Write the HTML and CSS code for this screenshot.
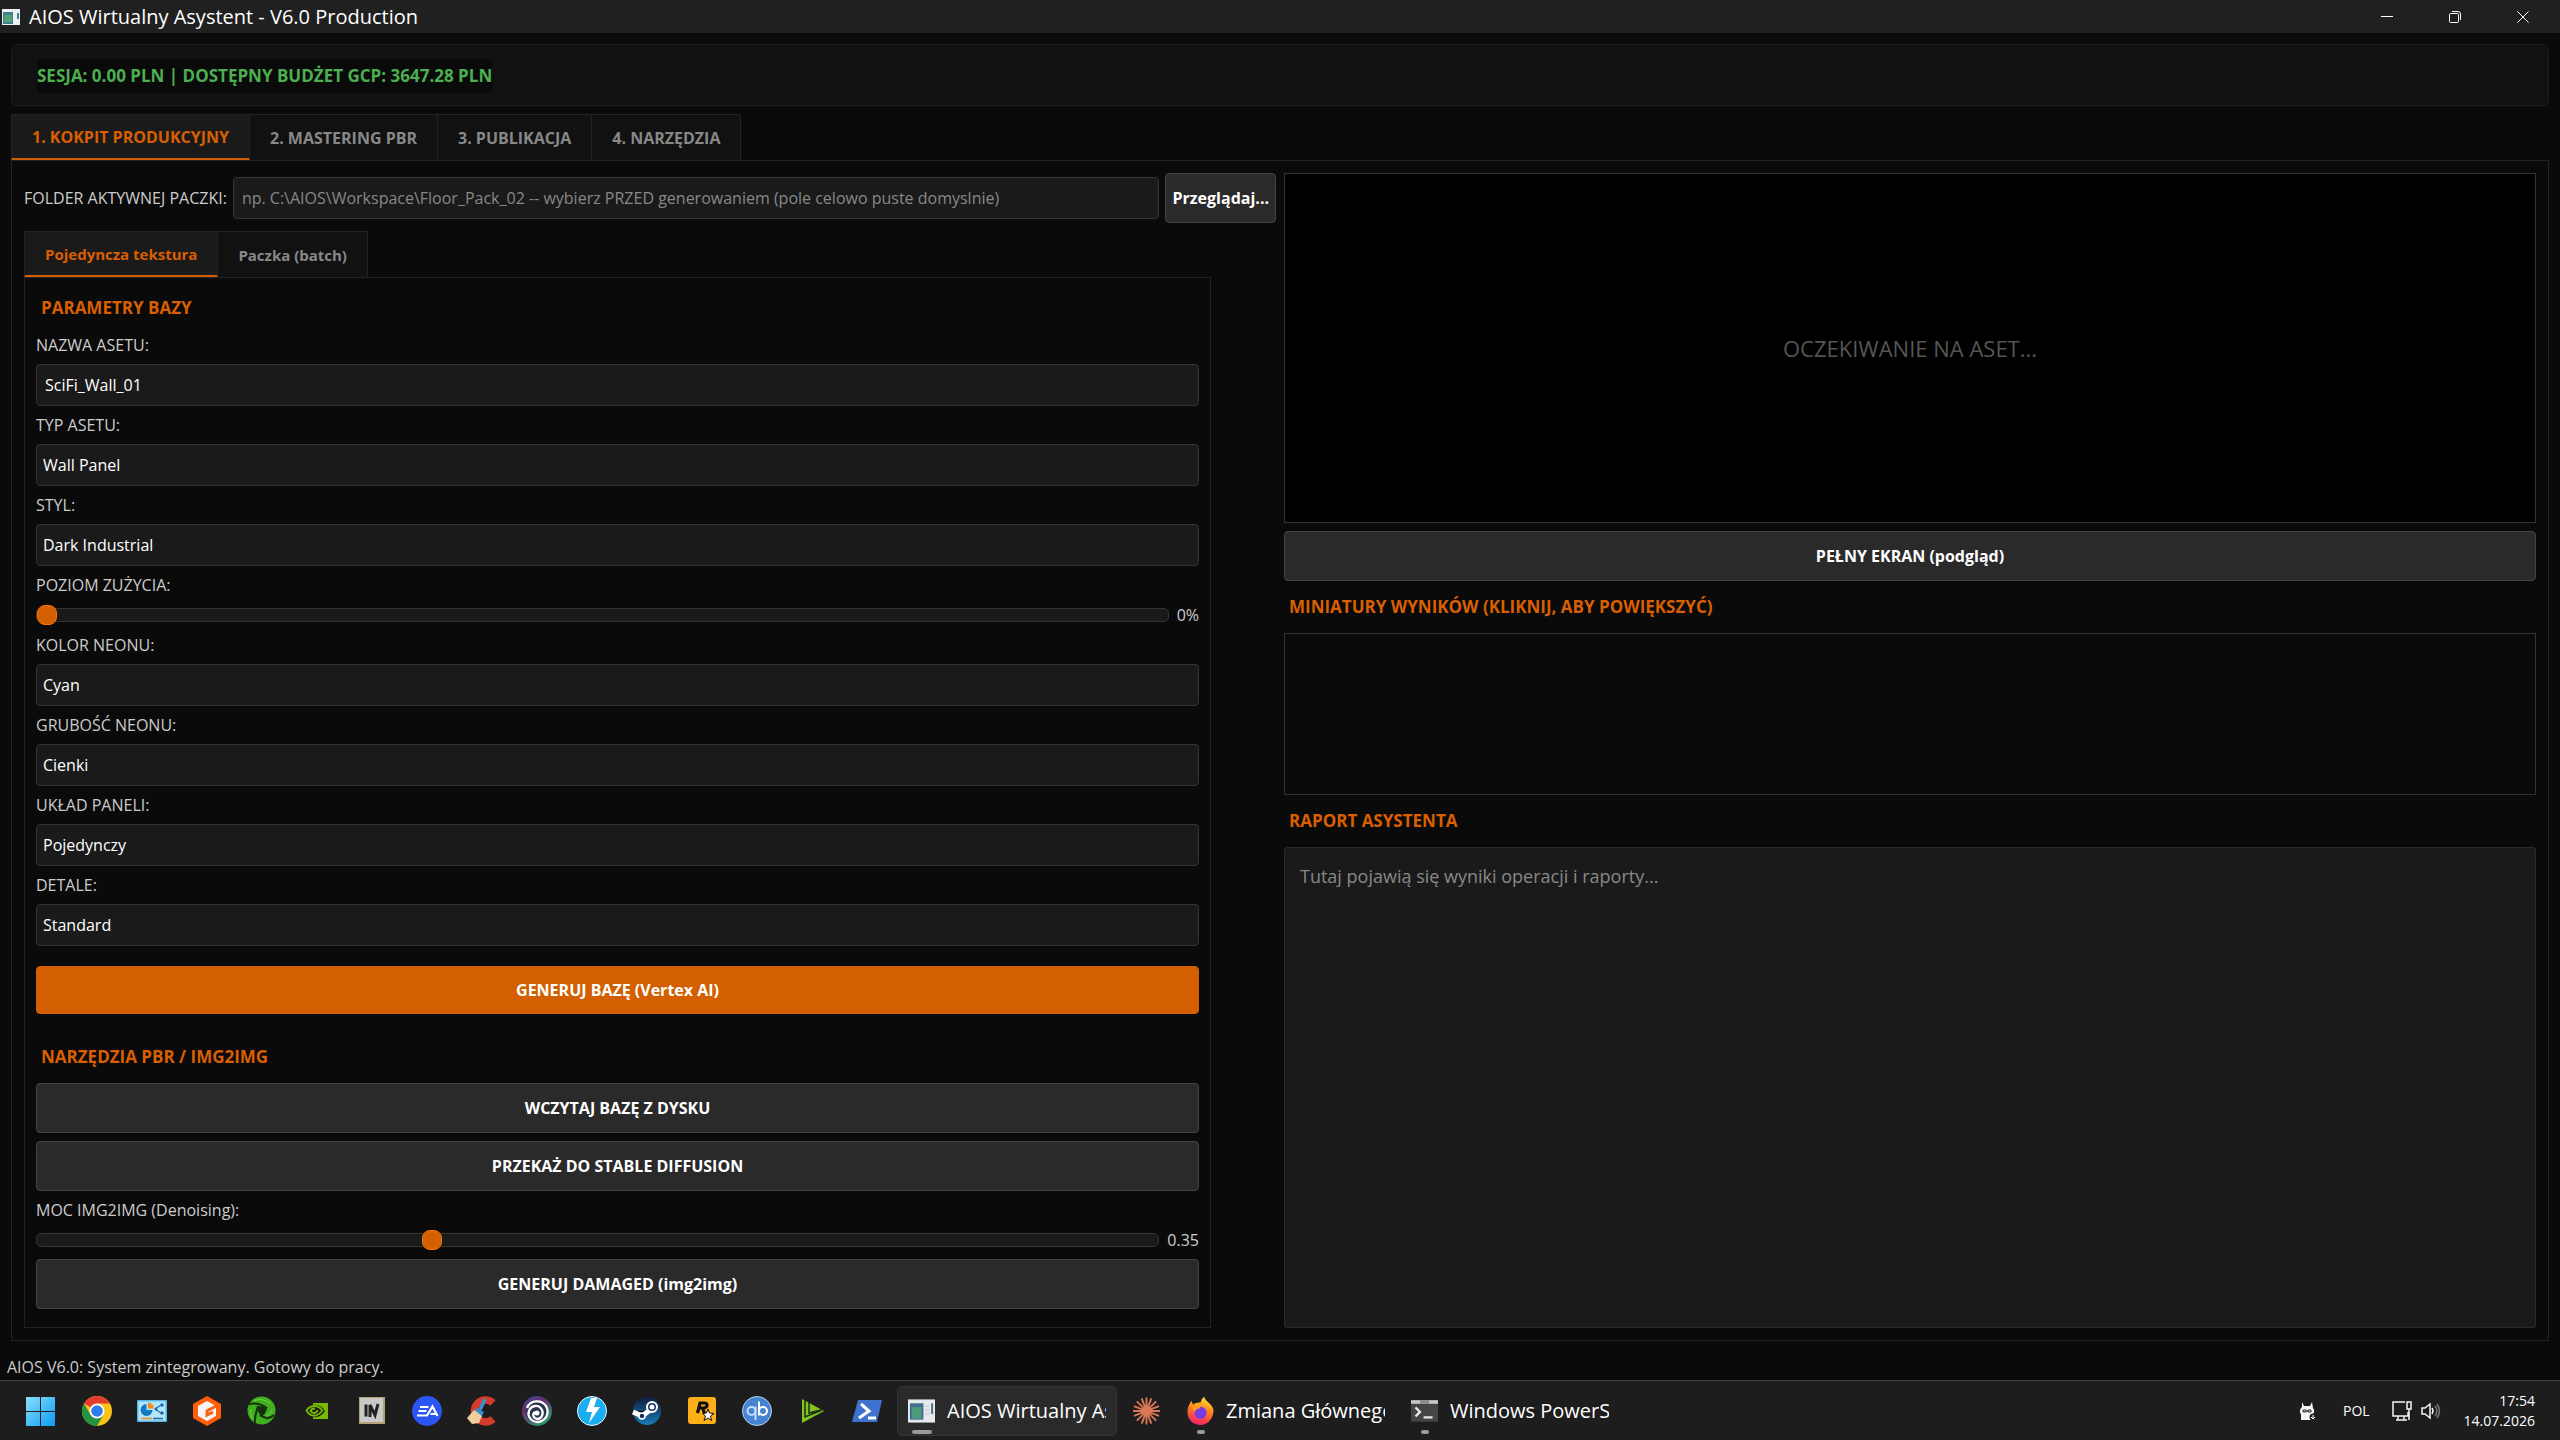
FILE: index.html
```html
<!DOCTYPE html>
<html lang="pl">
<head>
<meta charset="utf-8">
<title>AIOS Wirtualny Asystent - V6.0 Production</title>
<link rel="stylesheet" href="styles.css">
</head>
<body>
<div class="window">
  <header class="titlebar">
    <svg class="app-icon" viewBox="0 0 18 16"><rect width="18" height="16" fill="#eef1f3"/><rect x="1" y="3" width="10" height="12" fill="#3f7f8c"/><rect x="2" y="6" width="8" height="7" fill="#56a07c"/><rect x="15" y="4" width="2" height="6" fill="#3f7f8c"/></svg>
    <h1 class="window-title">AIOS Wirtualny Asystent - V6.0 Production</h1>
    <div class="window-controls">
      <button class="wc" aria-label="Minimalizuj"><svg viewBox="0 0 14 14"><path d="M1 6.500h12"/></svg></button>
      <button class="wc" aria-label="Przywróć"><svg viewBox="0 0 14 14"><rect x="1.500" y="3.500" width="9" height="9" rx="1"/><path d="M4 1.500h6a2.500 2.500 0 0 1 2.500 2.500v6"/></svg></button>
      <button class="wc" aria-label="Zamknij"><svg viewBox="0 0 14 14"><path d="M1.500 1.500l11 11M12.500 1.500l-11 11"/></svg></button>
    </div>
  </header>

  <main class="app">
    <section class="budget"><span class="budget-text">SESJA: 0.00 PLN | DOSTĘPNY BUDŻET GCP: 3647.28 PLN</span></section>

    <nav class="tabs">
      <button class="tab active">1. KOKPIT PRODUKCYJNY</button>
      <button class="tab">2. MASTERING PBR</button>
      <button class="tab">3. PUBLIKACJA</button>
      <button class="tab">4. NARZĘDZIA</button>
    </nav>

    <div class="pane">
      <div class="left">
        <div class="folder-row">
          <label for="folder">FOLDER AKTYWNEJ PACZKI:</label>
          <input class="field" id="folder" type="text" placeholder="np. C:\AIOS\Workspace\Floor_Pack_02 -- wybierz PRZED generowaniem (pole celowo puste domyslnie)">
          <button class="btn browse">Przeglądaj...</button>
        </div>
        <nav class="tabs subtabs">
          <button class="tab active">Pojedyncza tekstura</button>
          <button class="tab">Paczka (batch)</button>
        </nav>
        <form class="form">
          <h2 class="heading">PARAMETRY BAZY</h2>
          <label for="name">NAZWA ASETU:</label>
          <input class="field" id="name" type="text" value="SciFi_Wall_01">
          <label for="type">TYP ASETU:</label>
          <select class="field" id="type"><option>Wall Panel</option></select>
          <label for="style">STYL:</label>
          <select class="field" id="style"><option>Dark Industrial</option></select>
          <label for="wear">POZIOM ZUŻYCIA:</label>
          <div class="slider-row"><input class="slider" id="wear" type="range" min="0" max="100" value="0"><output for="wear">0%</output></div>
          <label for="color">KOLOR NEONU:</label>
          <select class="field" id="color"><option>Cyan</option></select>
          <label for="thick">GRUBOŚĆ NEONU:</label>
          <select class="field" id="thick"><option>Cienki</option></select>
          <label for="layout">UKŁAD PANELI:</label>
          <select class="field" id="layout"><option>Pojedynczy</option></select>
          <label for="details">DETALE:</label>
          <select class="field" id="details"><option>Standard</option></select>
          <button type="button" class="btn primary">GENERUJ BAZĘ (Vertex AI)</button>
          <h2 class="heading">NARZĘDZIA PBR / IMG2IMG</h2>
          <button type="button" class="btn">WCZYTAJ BAZĘ Z DYSKU</button>
          <button type="button" class="btn">PRZEKAŻ DO STABLE DIFFUSION</button>
          <label for="denoise">MOC IMG2IMG (Denoising):</label>
          <div class="slider-row"><input class="slider" id="denoise" type="range" min="0" max="1" step="0.01" value="0.35"><output for="denoise">0.35</output></div>
          <button type="button" class="btn">GENERUJ DAMAGED (img2img)</button>
        </form>
      </div>

      <div class="right">
        <div class="preview">OCZEKIWANIE NA ASET...</div>
        <button class="btn">PEŁNY EKRAN (podgląd)</button>
        <h2 class="heading">MINIATURY WYNIKÓW (KLIKNIJ, ABY POWIĘKSZYĆ)</h2>
        <div class="thumbs"></div>
        <h2 class="heading">RAPORT ASYSTENTA</h2>
        <textarea class="report" aria-label="Raport asystenta" placeholder="Tutaj pojawią się wyniki operacji i raporty..."></textarea>
      </div>
    </div>
  </main>

  <footer class="status">AIOS V6.0: System zintegrowany. Gotowy do pracy.</footer>
</div>

<div class="taskbar">
  <div class="launchers">
    <button class="launch" aria-label="Start"><svg viewBox="2 0 32 32"><defs><linearGradient id="win" x1="0" y1="0" x2="1" y2="1"><stop offset="0" stop-color="#8be0fb"/><stop offset="1" stop-color="#0a9af5"/></linearGradient></defs><path fill="url(#win)" d="M2 2h14v14H2zM17 2h14v14H17zM2 17h14v14H2zM17 17h14v14H17z"/></svg></button>
    <button class="launch" aria-label="Chrome"><svg viewBox="0 0 32 32"><circle cx="16" cy="16" r="15" fill="#fbc116"/><path fill="#e33b2e" d="M16 16L3 8.500A15 15 0 0 1 29 8.500H16z"/><path fill="#229342" d="M3 8.500A15 15 0 0 0 16 31L22.500 19.700 16 16 9.500 19.700z"/><circle cx="16" cy="16" r="7.500" fill="#fff"/><circle cx="16" cy="16" r="5.800" fill="#2f7de9"/></svg></button>
    <button class="launch" aria-label="Panel sterowania"><svg viewBox="0 0 32 32"><rect x="1" y="5" width="30" height="22" rx="1" fill="#59b7e8"/><rect x="2.500" y="6.500" width="27" height="19" fill="#b3e6fb"/><path fill="#1479c4" d="M10.500 9v6h6a6 6 0 1 1-6-6z"/><path fill="#f28a1c" d="M12 7.500a6 6 0 0 1 6 6h-6z"/><path stroke="#1f6cab" stroke-width="1.200" fill="none" d="M19 14l6-4M19 14l6 4"/><circle cx="20" cy="14" r="1.500" fill="#1f6cab"/><circle cx="26" cy="10" r="1.800" fill="#1f6cab"/><circle cx="26" cy="18" r="1.800" fill="#1f6cab"/><path stroke="#f28a1c" stroke-width="1.500" d="M5 23.500h11"/><path stroke="#1f6cab" stroke-width="1.500" d="M17 23.500h10"/></svg></button>
    <button class="launch" aria-label="G"><svg viewBox="0 0 32 32"><path fill="#ff5f0a" d="M16 1l14 8v14l-14 8-14-8V9z"/><path fill="#f4f6f8" d="M16 6l9 5v10l-9 5-9-5V11z"/><path fill="none" stroke="#ff5f0a" stroke-width="3" d="M28 9.500l-12 6.500v4l6-3"/></svg></button>
    <button class="launch" aria-label="Wir"><svg viewBox="0 0 32 32"><circle cx="15.500" cy="15.500" r="14" fill="#3fae1f"/><path fill="#17300f" d="M11 12c3-1 6-1 9 0l1 1c-1 3-2 6-5 8h-1c-2-3-4-5-4-9z"/><path fill="none" stroke="#17300f" stroke-width="2" d="M3 9c5-1 12 0 18 4M12 11c-1 5-4 10-3 18M28 20c-4 4-9 4-14 0M20 13c-1 5-3 7-6 8"/><path fill="none" stroke="#6fd247" d="M8 6c6-3 12-1 17 3M5 14c-1 4 0 8 2 10M26 14c0 4-3 6-6 7"/></svg></button>
    <button class="launch" aria-label="NVIDIA"><svg viewBox="0 0 32 32"><path fill="#76b900" d="M12 8h15v16H12z"/><path fill="#1d1d1d" d="M12 10c6-1 10 3 12 6-3 4-7 7-12 6z"/><path fill="none" stroke="#76b900" stroke-width="1.800" d="M14 11C9 11 7 13 5.500 15.500 8 20 12 21 15 20.500c3-1 5-3 6.500-5C19 12.500 17 11 14 11zM14 13.500c-2 0-4 .800-4.500 2.300 1 1.800 3 2.700 5 1.800 1-.400 2-1.600 2-2.600"/></svg></button>
    <button class="launch" aria-label="IV"><svg viewBox="0 0 32 32"><rect x="3" y="2" width="26" height="27" fill="#b3a278"/><rect x="4" y="3" width="23" height="24" fill="#c9c9c8"/><path fill="none" stroke="#222" stroke-width="3" d="M10 9.500v12M14 22V10l5 10 3-11"/></svg></button>
    <button class="launch" aria-label="EA"><svg viewBox="0 0 32 32"><circle cx="16" cy="16" r="15" fill="#2b55f3"/><path fill="none" stroke="#fff" stroke-width="2.200" d="M9 12h8.500M7.500 16h8M6 20.500h10l5.500-9 5 9.500M19.500 19h6"/></svg></button>
    <button class="launch" aria-label="CCleaner"><svg viewBox="0 0 32 32"><path fill="none" stroke="#d63a2b" stroke-width="7.500" d="M27 8a11 11 0 1 0 0 16"/><path stroke="#3792cf" stroke-width="3.500" d="M19 4l-5 11"/><path fill="#3792cf" d="M10 13l8 4-3 5-7-5z"/><path fill="#efcf9e" d="M8 15l8 6-3 7-7 1-5-6z"/></svg></button>
    <button class="launch" aria-label="Ubisoft"><svg viewBox="0 0 32 32"><defs><linearGradient id="ubi" x1="0" y1="0" x2="0.600" y2="1"><stop offset="0" stop-color="#29549b"/><stop offset=".4" stop-color="#6a2b72"/><stop offset="1" stop-color="#2c9a68"/></linearGradient></defs><circle cx="16" cy="16" r="15" fill="url(#ubi)"/><circle cx="16" cy="17" r="11" fill="#29344b"/><path fill="none" stroke="#fff" stroke-width="2.300" d="M6 13C9 5 20 4 25 11c4 7 0 15-8 16-7 0-11-6-9-11 2-6 10-7 13-1 2 5-1 9-5 9-4-1-5-5-2-7"/><circle cx="16" cy="18" r="2.500" fill="#fff"/></svg></button>
    <button class="launch" aria-label="DAEMON Tools"><svg viewBox="0 0 32 32"><circle cx="16" cy="16" r="14.500" fill="#19aef0" stroke="#e9f8ff"/><path fill="#fff" d="M15 3h6l-3 9h6L13 28l3-11h-6z"/></svg></button>
    <button class="launch" aria-label="Steam"><svg viewBox="0 0 32 32"><defs><linearGradient id="steam" x1="0" y1="0" x2="0" y2="1"><stop offset="0" stop-color="#101b3f"/><stop offset="1" stop-color="#187bb8"/></linearGradient></defs><circle cx="16" cy="16" r="14" fill="url(#steam)"/><path stroke="#fff" stroke-width="5" d="M2 17l9 4 8-6"/><circle cx="21" cy="12" r="5" fill="#16315d" stroke="#fff" stroke-width="2"/><circle cx="21" cy="12" r="2.500" fill="#fff"/><circle cx="11" cy="21" r="3" fill="#16315d" stroke="#fff" stroke-width="1.500"/></svg></button>
    <button class="launch" aria-label="Rockstar"><svg viewBox="0 0 32 32"><rect x="2" y="2" width="28" height="27" rx="3" fill="#fcaf17"/><path fill="none" stroke="#111" stroke-width="3.200" d="M11.500 18l2.500-10h4.500c4 0 3 5 -1 5h-4M16.500 13L18.500 18"/><path fill="#fff" stroke="#111" d="M22 14l1.500 4 4.500.500-3.500 2.500 1 4.500-3.500-2.500-4 2.500 1.500-4.500-3-2.500 4-.500z"/></svg></button>
    <button class="launch" aria-label="qBittorrent"><svg viewBox="0 0 32 32"><circle cx="16" cy="16" r="14.500" fill="#4583d3" stroke="#b9d3f2"/><circle cx="10.500" cy="16" r="4" fill="none" stroke="#c6ddfa" stroke-width="2"/><path stroke="#c6ddfa" stroke-width="2" d="M14.500 11.500V25"/><path stroke="#fff" stroke-width="2" d="M18 6.500V20.500"/><circle cx="22" cy="16" r="4" fill="none" stroke="#fff" stroke-width="2"/></svg></button>
    <button class="launch" aria-label="Odtwarzacz"><svg viewBox="0 0 32 32"><path fill="#83c41d" d="M6 4l22 12L6 28z"/><path fill="none" stroke="#1d2c14" stroke-width="1.500" d="M9 5v17l17-7M13 7v11l12-3"/></svg></button>
    <button class="launch" aria-label="PowerShell"><svg viewBox="0 0 32 32"><path fill="#3f72cf" d="M7 5h24l-5 22H1z"/><path fill="none" stroke="#fff" stroke-width="3" d="M10 9l8 7L8 23M17 23h8"/></svg></button>
  </div>

  <button class="task current"><svg viewBox="0 0 28 24"><rect width="28" height="24" fill="#e6e9eb"/><rect x="2" y="4" width="14" height="17" fill="#426f90"/><rect x="4" y="8" width="10" height="12" fill="#4c9b7b"/><path stroke="#bcc3c8" d="M18 7h4M18 11h4M18 15h4"/><rect x="24" y="4" width="2" height="11" fill="#426f90"/></svg><span>AIOS Wirtualny Asystent</span></button>
  <button class="task solo" aria-label="Claude"><svg viewBox="0 0 28 28"><path stroke="#d97757" stroke-width="2" d="M14 0v28M0 14h28M4 4l20 20M24 4L4 24M9 1l10 26M19 1L9 27M1 9l26 10M1 19L27 9"/></svg></button>
  <button class="task open"><svg viewBox="0 0 28 30"><defs><linearGradient id="fox" x1="0.700" y1="0" x2="0.400" y2="1"><stop offset="0" stop-color="#ffe12f"/><stop offset=".5" stop-color="#ff7a1f"/><stop offset="1" stop-color="#f01d6a"/></linearGradient></defs><path fill="url(#fox)" d="M18 0c1 5 8 6 10 14 0 9-6 16-14 16S0 24 0 16C0 11 2 8 4 4l2 4c3-2 6-2 8-2 1-3 2-5 4-6z"/><circle cx="14" cy="17" r="6.500" fill="#7a3be0"/><path fill="#ff9a22" d="M5 10c4-2 8-1 9 2-3 0-5 1-6 4-1-2-3-3-3-6z"/></svg><span>Zmiana Głównego okna</span></button>
  <button class="task open"><svg viewBox="0 0 30 24"><rect width="30" height="24" rx="1" fill="#454545"/><path fill="#c9c9c9" d="M0 0h30v4H0z"/><path fill="#8b8b8b" d="M10 0h10v4H10z"/><path fill="none" stroke="#e8e8e8" stroke-width="2.500" d="M5 8l5 5-5 5M14 19h10"/></svg><span>Windows PowerShell</span></button>

  <div class="tray">
    <svg class="llama" viewBox="0 0 18 20"><path fill="#f5f5f5" d="M3 1l2 4h6l2-4 1 6c2 3 1 5 0 6v6H2v-6C0 11 1 8 3 6z"/><path fill="none" stroke="#222" d="M4 9h3v2H4zM9 9h3v2H9zM7 10h2"/><circle cx="14" cy="16" r="3.500" fill="#222"/><path stroke="#fff" fill="none" d="M14 14v4M12 16l2 2 2-2"/></svg>
    <button class="lang">POL</button>
    <button class="net" aria-label="Sieć i dźwięk">
      <svg viewBox="0 0 20 20"><path fill="none" stroke="#f4f4f4" stroke-width="1.500" d="M13 1H1v14h15v-4M6 15v4M12 15v4M4 19h11M15 1h4v7h-4zM17 8v11"/></svg>
      <svg viewBox="0 0 20 20"><path fill="none" stroke="#f4f4f4" stroke-width="1.500" d="M1 7h3l5-4v14l-5-4H1zM11 7q2 3 0 6"/><path fill="none" stroke="#777" stroke-width="1.500" d="M14 5q4 5 0 10M16 3q5 7 0 14"/></svg>
    </button>
    <button class="clock"><time>17:54</time><time>14.07.2026</time></button>
  </div>
</div>
</body>
</html>
```
FILE: styles.css
```css
* { box-sizing: border-box; }

body {
  margin: 0;
  min-height: 100vh;
  display: flex;
  flex-direction: column;
  background: #0a0a0a;
  color: #ccc;
  font: 16px/22px "Open Sans", "Noto Sans", sans-serif;
}

button, input, select, textarea { font: inherit; color: inherit; margin: 0; }
button { border: 0; background: none; padding: 0; white-space: nowrap; }

.window { flex: 1; display: flex; flex-direction: column; }

.titlebar { display: flex; align-items: center; height: 33px; padding: 0 3px 0 2px; gap: 9px; background: #202020; color: #fff; }
.app-icon { width: 18px; height: 16px; }
.window-title { margin: 0; flex: 1; font-size: 20px; font-weight: 400; line-height: 32px; }
.window-controls { display: flex; align-self: stretch; }
.wc { width: 68px; display: grid; place-items: center; }
.wc svg { width: 14px; height: 14px; fill: none; stroke: #fff; }

.app { flex: 1; display: flex; flex-direction: column; padding: 11px 11px 0; }

.budget { display: flex; padding: 14px 25px 12px; border: 1px solid #1f1f1f; border-radius: 6px; background: #111; }
.budget-text { line-height: 34px; background: #0a0a0a; color: #4caf50; font-size: 17px; font-weight: 700; }

.tabs { display: flex; margin-top: 8px; }
.tab { height: 46px; padding: 0 20px; border: 1px solid #222; border-left-width: 0; border-bottom: 0; background: #111; color: #888; font-weight: 700; }
.tab:first-child { border-left-width: 1px; }
.tab.active { border-bottom: 3px solid #d35f00; margin-bottom: -1px; background: #1a1a1a; color: #d95f00; height: 47px; }
.subtabs .tab { font-size: 15px; }

.pane { flex: 1; display: grid; grid-template-columns: 1fr 1fr; gap: 8px; padding: 12px; border: 1px solid #222; }
.left, .right { display: flex; flex-direction: column; min-width: 0; }

.folder-row { display: flex; align-items: center; gap: 6px; }
.folder-row .field { flex: 1; min-width: 0; }

.field { height: 42px; padding: 0 8px; border: 1px solid #333; border-radius: 4px; background: #1a1a1a; color: #fff; outline: 0; }
select.field { appearance: none; padding: 0 6px; }
.field::placeholder { color: #888; opacity: 1; }

.btn { height: 50px; border: 1px solid #444; border-radius: 4px; background: #2a2a2a; color: #fff; font-weight: 700; }
.btn.browse { padding: 0 6px; }
.btn.primary { height: 48px; margin: 12px 0 17px; border-color: #d35f00; background: #d35f00; }

.form { flex: 1; display: flex; flex-direction: column; gap: 8px; margin-right: 65px; padding: 12px 11px 18px; border: 1px solid #222; }
.heading { margin: 0; padding-left: 5px; font-size: 17px; line-height: 36px; color: #d95f00; }

.slider-row { display: flex; align-items: center; gap: 8px; height: 22px; }
.slider { flex: 1; min-width: 0; height: 20px; appearance: none; background: none; }
.slider::-webkit-slider-runnable-track { height: 14px; border: 1px solid #333; border-radius: 5px; background: #1a1a1a; }
.slider::-webkit-slider-thumb { appearance: none; width: 20px; height: 20px; margin-top: -4px; border: 1px solid #ff7300; border-radius: 8px; background: #d35f00; }

.right { gap: 8px; }
.preview { height: 350px; display: grid; place-items: center; border: 1px solid #333; background: #000; color: #555; font-size: 22px; }
.thumbs { height: 162px; border: 1px solid #333; }
.report { flex: 1; resize: none; padding: 14px 15px; border: 1px solid #2a2a2a; border-radius: 3px; background: #1a1a1a; font-size: 18px; line-height: 28px; outline: 0; }
.report::placeholder { color: #888; }

.status { padding: 15px 7px 2px; line-height: 22px; }

.taskbar { display: flex; align-items: center; height: 60px; padding: 0 25px 0 26px; border-top: 1px solid #444; background: #1d1d1d; color: #fff; font-size: 20px; }
.launchers { display: flex; gap: 23px; margin-right: 14px; }
.launch { width: 32px; height: 32px; }
.launch svg { width: 32px; height: 32px; display: block; }

.task { position: relative; display: flex; align-items: center; gap: 12px; height: 50px; padding: 0 10px; border: 1px solid transparent; border-radius: 5px; }
.task svg { width: 27px; height: 28px; flex: none; }
.task span { width: 159px; overflow: hidden; text-align: left; line-height: 30px; }
.task.current { border-color: #333; background: #2a2a2a; }
.task.solo { margin: 0 5px; }
.task.open + .open { margin-left: 4px; }
.task::after { content: ""; position: absolute; left: 20px; bottom: 1px; width: 8px; height: 4px; border-radius: 2px; background: #999; }
.task.current::after { left: 14px; width: 20px; }
.task.solo::after { display: none; }

.tray { display: flex; align-items: center; margin-left: auto; font-size: 14px; }
.llama { width: 18px; height: 20px; margin-right: 26px; }
.lang { margin-right: 22px; }
.net { display: flex; gap: 9px; margin-right: 23px; }
.net svg { width: 20px; height: 20px; }
.clock { display: flex; flex-direction: column; line-height: 20px; text-align: right; }
```
